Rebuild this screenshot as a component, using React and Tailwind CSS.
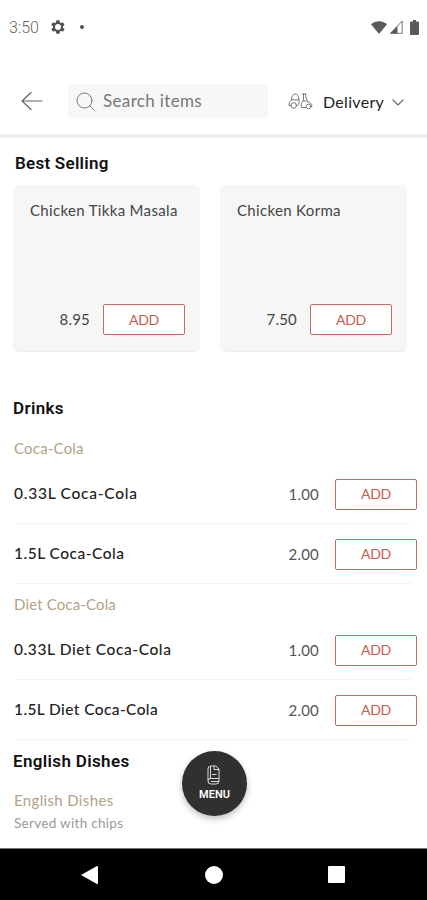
import React from "react";

const drinks = [
  {
    title: "Coca-Cola",
    titleClass: "h-[31px] pb-px tracking-[0.2px]",
    items: [
      { name: "0.33L Coca-Cola", price: "1.00", tracking: "tracking-[0.75px]" },
      { name: "1.5L Coca-Cola", price: "2.00", tracking: "tracking-[0.5px]" },
    ],
  },
  {
    title: "Diet Coca-Cola",
    titleClass: "h-[36px] pt-[4px] tracking-[0.15px]",
    items: [
      { name: "0.33L Diet Coca-Cola", price: "1.00", tracking: "tracking-[0.6px]" },
      { name: "1.5L Diet Coca-Cola", price: "2.00", tracking: "tracking-[0.4px]" },
    ],
  },
];

const bestSelling = [
  { name: "Chicken Tikka Masala", price: "8.95" },
  { name: "Chicken Korma", price: "7.50" },
];

function StatusBar() {
  return (
    <div className="flex h-[56px] items-center pl-[9px] pr-[8px]">
      <span className="font-[Roboto,sans-serif] text-[16px] font-light text-[#666]">3:50</span>
      <svg className="ml-[11px] mb-[2px] size-[16px]" viewBox="0 0 24 24" fill="#505050">
        <path d="M19.4 13c0-.3.1-.6.1-1s0-.7-.1-1l2.1-1.600c.2-.2.3-.4.1-.7l-2-3.400c-.1-.2-.4-.3-.6-.2l-2.500 1c-.5-.4-1.100-.7-1.700-1L14.400 2.400c0-.2-.2-.4-.5-.4h-4c-.2 0-.4.200-.5.400L9 5.100c-.6.200-1.200.600-1.700 1l-2.500-1c-.2-.1-.5 0-.6.200l-2 3.400c-.1.300-.1.500.100.700L4.500 11c0 .3-.1.600-.1 1s0 .7.1 1l-2.200 1.600c-.2.200-.2.400-.1.700l2 3.400c.1.200.4.300.6.200l2.500-1c.5.400 1.100.7 1.700 1l.4 2.700c.1.200.3.400.5.400h4c.3 0 .5-.2.500-.4l.4-2.700c.6-.3 1.200-.6 1.700-1l2.500 1c.2.100.5 0 .6-.2l2-3.400c.2-.3.100-.5-.1-.7zM12 16.500a4.500 4.500 0 1 1 0-9 4.500 4.500 0 0 1 0 9z" />
      </svg>
      <span className="ml-[14px] mb-[2px] size-[4px] rounded-full bg-[#505050]" />
      <div className="ml-auto mb-[2px] flex items-center">
        <svg className="h-[13px] w-[16px]" viewBox="0 0 16 13" fill="#5a5a5a">
          <path d="M0 3.200C4.500-.9 11.500-.9 16 3.200L8 13z" />
        </svg>
        <svg className="ml-[2px] h-[14px] w-[14px]" viewBox="0 0 14 14">
          <path d="M1.500 13.300 13.200 1v12.300z" fill="none" stroke="#777" />
          <path d="M1 13.500 8.500 6v7.500z" fill="#5a5a5a" />
        </svg>
        <svg className="ml-[7px] h-[15px] w-[9px]" viewBox="0 0 9 15" fill="#5a5a5a">
          <path d="M3 0h3v1.500h2.200c.5 0 .8.300.8.800v11.900c0 .5-.3.800-.8.800H.8c-.5 0-.8-.3-.8-.8V2.300c0-.5.300-.8.800-.8H3z" />
        </svg>
      </div>
    </div>
  );
}

function Header() {
  return (
    <div className="flex h-[82px] items-center border-b-[4px] border-[#f0f0f0] pl-[21px] pt-[12px]">
      <svg className="h-[20px] w-[22px]" viewBox="0 0 22 20" fill="none" stroke="#666" strokeWidth="1.2" strokeLinecap="round" strokeLinejoin="round">
        <path d="M21 10H1M10 1.500 1 10l9 8.500" />
      </svg>
      <div className="ml-[25px] flex h-[34px] w-[200px] items-center rounded-[3px] bg-[#f7f7f7] pl-[8px]">
        <svg className="size-[19px]" viewBox="0 0 19 19" fill="none" stroke="#777" strokeLinecap="round">
          <circle cx="8.500" cy="8.500" r="7.500" />
          <path d="m14 14 4 4" />
        </svg>
        <span className="ml-[8px] text-[17px] text-[#777] tracking-[0.35px]">Search items</span>
      </div>
      {/* Scooter */}
      <svg className="ml-[20px] h-[18px] w-[25px]" viewBox="0 0 25 18" fill="none" stroke="#777" strokeLinecap="round" strokeLinejoin="round">
        <path d="M3.500 7.500C3.500 4 5 2 7.200 2S11 4 11 7.500zM4 7.500C2 8.500 1 10.500 1 13.500h2M8.500 13.500c2.500 0 3-2.500 2.500-6" />
        <circle cx="5.700" cy="13.500" r="2.800" />
        <path d="M14.500 2h3.500M17.500 2l.5 3.500 2 4.500c2.500.5 4 2 4 4.500h-1M15.500 2v6l-1.500 2.500c-1 1.500-1 3.500-.5 5h4M15.500 9h3" />
        <circle cx="20.500" cy="14.500" r="2.300" />
      </svg>
      <span className="ml-[10px] mt-px text-[16px] text-[#222] tracking-[0.3px]">Delivery</span>
      <svg className="ml-[8px] mt-[3px] h-[7px] w-[12px]" viewBox="0 0 12 7" fill="none" stroke="#666" strokeWidth="1.200" strokeLinecap="round">
        <path d="m1 1 5 5 5-5" />
      </svg>
    </div>
  );
}

function AddButton() {
  return (
    <button className="h-[31px] w-[82px] shrink-0 rounded-[2px] border border-[#c46b60] bg-white pb-px text-[14px] text-[#c45d50] tracking-[-0.3px]">
      ADD
    </button>
  );
}

function BestSellingCard({ name, price }) {
  return (
    <div className="flex h-[166px] w-[187px] flex-col justify-between rounded-[7px] bg-[#f6f6f6] pb-[16px] pl-[17px] pr-[15px] pt-[15px] shadow-[0_1px_1px_#ededed]">
      <h3 className="text-[15px] leading-[20px] text-[#444] tracking-[0.33px]">{name}</h3>
      <div className="flex items-center justify-end gap-[13px]">
        <span className="text-[15px] text-[#444] tracking-[0.2px]">{price}</span>
        <AddButton />
      </div>
    </div>
  );
}

function MenuRow({ name, price, tracking }) {
  return (
    <div className="flex h-[60px] items-center pl-[14px] pr-[10px]">
      <span className={`text-[15.5px] font-medium text-[#222] ${tracking}`}>{name}</span>
      <span className="ml-auto mr-[16px] text-[15px] text-[#555] tracking-[0.2px]">{price}</span>
      <AddButton />
    </div>
  );
}

function Divider() {
  return <div className="-mt-px ml-[16px] mr-[15px] h-px bg-[#f3f3f3]" />;
}

function NavBar() {
  return (
    <div className="flex h-[52px] items-center border-t border-[#777] bg-black pl-[81px]">
      <svg className="h-[20px] w-[17px]" viewBox="0 0 17 20" fill="white">
        <path d="M0 10 16 1q1-.5 1 1v16q0 1.500-1 1z" />
      </svg>
      <span className="ml-[107px] size-[18px] rounded-full bg-white" />
      <span className="ml-[105px] size-[17px] rounded-[1px] bg-white" />
    </div>
  );
}

export default function App() {
  return (
    <div className="relative flex h-[900px] w-[427px] flex-col overflow-hidden bg-white font-[Lato,sans-serif]">
      <StatusBar />
      <Header />
      <main className="flex-1">
        <h2 className="ml-[15px] flex h-[47px] items-center pt-[5px] font-[Roboto,sans-serif] text-[17px] font-semibold text-[#111] tracking-[0.25px]">
          Best Selling
        </h2>
        <div className="flex gap-[20px] pl-[13px]">
          {bestSelling.map((item) => (
            <BestSellingCard key={item.name} {...item} />
          ))}
        </div>

        <h2 className="ml-[13px] mt-[43px] flex h-[30px] items-center font-[Roboto,sans-serif] text-[17px] font-semibold text-[#111] tracking-[0.35px]">
          Drinks
        </h2>
        <div className="pt-[9px]">
          {drinks.map((group) => (
            <section key={group.title}>
              <h3 className={`ml-[14px] flex items-center text-[15px] text-[#b0a386] ${group.titleClass}`}>
                {group.title}
              </h3>
              {group.items.map((item) => (
                <React.Fragment key={item.name}>
                  <MenuRow {...item} />
                  <Divider />
                </React.Fragment>
              ))}
            </section>
          ))}
        </div>

        <h2 className="ml-[13px] flex h-[43px] items-center font-[Roboto,sans-serif] text-[17px] font-semibold text-[#111] tracking-[0.35px]">
          English Dishes
        </h2>
        <h3 className="ml-[14px] mt-[7px] text-[15px] leading-[20px] text-[#b0a386] tracking-[0.35px]">English Dishes</h3>
        <p className="ml-[14px] mt-[4px] text-[13.5px] leading-[18px] text-[#999] tracking-[0.3px]">Served with chips</p>
      </main>
      <NavBar />

      {/* Floating menu button */}
      <button className="absolute left-[182px] top-[751px] flex size-[65px] flex-col items-center rounded-full bg-[#303030] pt-[14px] text-white shadow-[0_3px_6px_rgba(0,0,0,0.25)]">
        <svg className="mr-[2px] h-[20px] w-[13px]" viewBox="0 0 13 20" fill="none" stroke="#ddd" strokeLinejoin="round">
          <path d="M1 4q0-3 3-3h5l3 3v12q0 3-3 3H4q-3 0-3-3z" />
          <path d="M3.500 1.500v12M1 15.500q0-2 3-2h8M4 16.500h8M7 1.500v3h5M5 9.500h4.500" />
        </svg>
        <span className="mt-[3px] font-[Roboto,sans-serif] text-[11px] font-semibold leading-[13px]">MENU</span>
      </button>
    </div>
  );
}
